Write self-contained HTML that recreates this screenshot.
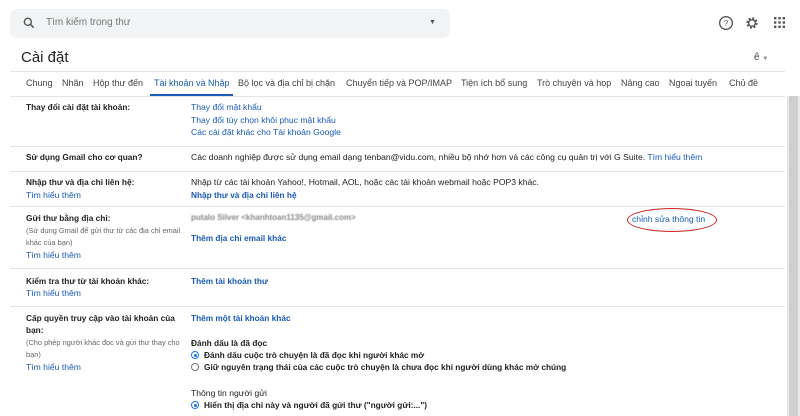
<!DOCTYPE html><html><head><meta charset="utf-8"><style>
*{margin:0;padding:0;box-sizing:border-box}
body{width:800px;height:416px;overflow:hidden;background:#fff;font-family:"Liberation Sans",sans-serif;color:#222;position:relative;font-size:8.6px}
.a{position:absolute;white-space:nowrap;line-height:12px}
.l{color:#1a5ab8}
.b{font-weight:bold;font-size:8.3px}
.g{color:#666;font-size:7.4px}
.hr{position:absolute;left:10px;width:775px;height:1px;background:#e4e4e4}
.tab{position:absolute;top:78px;font-size:9px;color:#444;white-space:nowrap}
.r{position:absolute;width:8px;height:8px;border-radius:50%;border:1px solid #777;left:191px}
.r.on{border-color:#1a73e8}
.r.on::after{content:"";position:absolute;left:1.5px;top:1.5px;width:3px;height:3px;border-radius:50%;background:#1a73e8}
</style></head><body>
<div style="position:absolute;left:10px;top:9px;width:440px;height:29px;background:#f1f3f4;border-radius:7px"></div>
<svg class="a" style="left:22px;top:16px" width="14" height="14" viewBox="0 0 24 24"><circle cx="10" cy="10" r="6" fill="none" stroke="#555" stroke-width="2.4"/><path d="M14.5 14.5L20 20" stroke="#555" stroke-width="2.6"/></svg>
<div class="a" style="left:46px;top:17px;font-size:10px;color:#777">Tìm kiếm trong thư</div>
<div class="a" style="left:429px;top:17px;font-size:7px;color:#555">▼</div>
<svg class="a" style="left:718px;top:15px" width="16" height="16" viewBox="0 0 24 24"><circle cx="12" cy="12" r="9.5" fill="none" stroke="#555" stroke-width="2"/><text x="12" y="16.5" font-size="12" text-anchor="middle" fill="#555" font-family="Liberation Sans">?</text></svg>
<svg class="a" style="left:744px;top:15px" width="16" height="16" viewBox="0 0 24 24"><circle cx="12" cy="12" r="7" fill="none" stroke="#555" stroke-width="3" stroke-dasharray="3 2.5"/><circle cx="12" cy="12" r="5" fill="none" stroke="#555" stroke-width="2"/></svg>
<svg class="a" style="left:774px;top:17px" width="11" height="11" viewBox="0 0 11 11" fill="#555"><rect x="0" y="0" width="2.4" height="2.4"/><rect x="4.3" y="0" width="2.4" height="2.4"/><rect x="8.6" y="0" width="2.4" height="2.4"/><rect x="0" y="4.3" width="2.4" height="2.4"/><rect x="4.3" y="4.3" width="2.4" height="2.4"/><rect x="8.6" y="4.3" width="2.4" height="2.4"/><rect x="0" y="8.6" width="2.4" height="2.4"/><rect x="4.3" y="8.6" width="2.4" height="2.4"/><rect x="8.6" y="8.6" width="2.4" height="2.4"/></svg>
<div class="a" style="left:21px;top:49px;font-size:15px;line-height:18px;color:#222">Cài đặt</div>
<div class="a" style="left:754px;top:52px;font-size:10px;color:#444">ê <span style="font-size:6px;color:#888">▼</span></div>
<div class="hr" style="top:71px"></div>
<div class="tab" style="left:26px">Chung</div>
<div class="tab" style="left:62px">Nhãn</div>
<div class="tab" style="left:93px">Hộp thư đến</div>
<div class="tab" style="left:154px;color:#1a5ab8">Tài khoản và Nhập</div>
<div style="position:absolute;left:150px;top:94px;width:83px;height:2px;background:#1a5ab8"></div>
<div class="tab" style="left:238px">Bộ lọc và địa chỉ bị chặn</div>
<div class="tab" style="left:346px">Chuyển tiếp và POP/IMAP</div>
<div class="tab" style="left:461px">Tiện ích bổ sung</div>
<div class="tab" style="left:537px">Trò chuyện và họp</div>
<div class="tab" style="left:621px">Nâng cao</div>
<div class="tab" style="left:669px">Ngoại tuyến</div>
<div class="tab" style="left:729px">Chủ đề</div>
<div class="hr" style="top:96px"></div>
<div style="position:absolute;left:787px;top:96px;width:13px;height:320px;background:#e8e8e8"></div>
<div style="position:absolute;left:789px;top:96px;width:9px;height:320px;background:#cfcfcf"></div>

<div class="a b" style="left:26px;top:101px">Thay đổi cài đặt tài khoản:</div>
<div class="a l" style="left:191px;top:101px">Thay đổi mật khẩu</div>
<div class="a l" style="left:191px;top:114px">Thay đổi tùy chọn khôi phục mật khẩu</div>
<div class="a l" style="left:191px;top:126px">Các cài đặt khác cho Tài khoản Google</div>
<div class="hr" style="top:146px"></div>
<div class="a b" style="left:26px;top:151px">Sử dụng Gmail cho cơ quan?</div>
<div class="a" style="left:191px;top:151px">Các doanh nghiệp được sử dụng email dạng tenban@vidu.com, nhiều bộ nhớ hơn và các công cụ quản trị với G Suite. <span class="l">Tìm hiểu thêm</span></div>
<div class="hr" style="top:171px"></div>
<div class="a b" style="left:26px;top:176px">Nhập thư và địa chỉ liên hệ:</div>
<div class="a l" style="left:26px;top:189px">Tìm hiểu thêm</div>
<div class="a" style="left:191px;top:176px">Nhập từ các tài khoản Yahoo!, Hotmail, AOL, hoặc các tài khoản webmail hoặc POP3 khác.</div>
<div class="a l b" style="left:191px;top:189px">Nhập thư và địa chỉ liên hệ</div>
<div class="hr" style="top:206px"></div>
<div class="a b" style="left:26px;top:212px">Gửi thư bằng địa chỉ:</div>
<div class="a g" style="left:26px;top:225px">(Sử dụng Gmail để gửi thư từ các địa chỉ email</div>
<div class="a g" style="left:26px;top:237px">khác của bạn)</div>
<div class="a l" style="left:26px;top:249px">Tìm hiểu thêm</div>
<div class="a b" style="left:191px;top:212px;color:#888;font-size:8px;filter:blur(0.6px)">putalo Silver &lt;khanhtoan1135@gmail.com&gt;</div>
<div class="a l b" style="left:191px;top:232px">Thêm địa chỉ email khác</div>
<div class="a l" style="left:632px;top:213px">chỉnh sửa thông tin</div>
<div style="position:absolute;left:627px;top:208px;width:90px;height:24px;border:1px solid #c22;border-radius:50%"></div>
<div class="hr" style="top:268px"></div>
<div class="a b" style="left:26px;top:275px">Kiểm tra thư từ tài khoản khác:</div>
<div class="a l" style="left:26px;top:287px">Tìm hiểu thêm</div>
<div class="a l b" style="left:191px;top:275px">Thêm tài khoản thư</div>
<div class="hr" style="top:306px"></div>
<div class="a b" style="left:26px;top:312px">Cấp quyền truy cập vào tài khoản của</div>
<div class="a b" style="left:26px;top:324px">bạn:</div>
<div class="a g" style="left:26px;top:337px">(Cho phép người khác đọc và gửi thư thay cho</div>
<div class="a g" style="left:26px;top:349px">bạn)</div>
<div class="a l" style="left:26px;top:361px">Tìm hiểu thêm</div>
<div class="a l b" style="left:191px;top:312px">Thêm một tài khoản khác</div>
<div class="a b" style="left:191px;top:337px">Đánh dấu là đã đọc</div>
<div class="r on" style="top:351px"></div>
<div class="a b" style="left:204px;top:349px">Đánh dấu cuộc trò chuyện là đã đọc khi người khác mở</div>
<div class="r" style="top:363px"></div>
<div class="a b" style="left:204px;top:361px">Giữ nguyên trạng thái của các cuộc trò chuyện là chưa đọc khi người dùng khác mở chúng</div>
<div class="a" style="left:191px;top:387px">Thông tin người gửi</div>
<div class="r on" style="top:401px"></div>
<div class="a b" style="left:204px;top:399px">Hiển thị địa chỉ này và người đã gửi thư ("người gửi:...")</div>
</body></html>
